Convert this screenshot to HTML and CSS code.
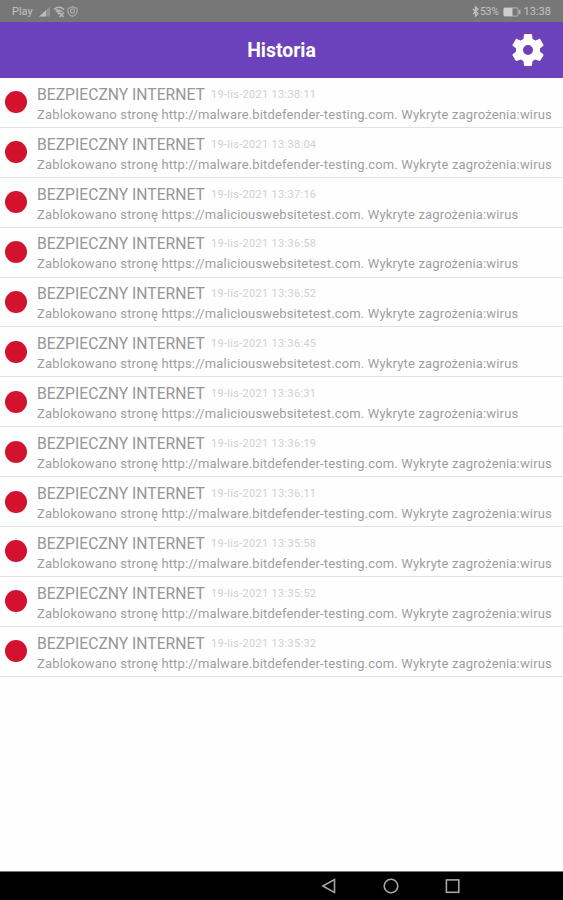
FILE: index.html
```
<!DOCTYPE html>
<html lang="pl">
<head>
  <meta charset="UTF-8">
  <meta name="viewport" content="width=device-width, initial-scale=1.0">
  <title>Historia</title>
  <link rel="stylesheet" href="styles.css">
</head>
<body>
  <!-- Status bar -->
  <div class="status-bar">
    <div class="status-left">
      <span class="carrier">Play</span>
      <svg class="signal" width="12" height="11" viewBox="0 0 12 11">
        <path d="M0 10.5L11 0.5V10.5Z" fill="#929292"/>
        <path d="M0 10.5L7 4.2V10.5Z" fill="#bcbcbc"/>
      </svg>
      <svg width="12" height="12" viewBox="0 0 12 12" fill="none" stroke="#b8b8b8" stroke-width="1.5">
        <path d="M0.8 3.5Q6 -1 11.2 3.5M2.8 5.7Q6 3 9.2 5.7M4.5 7.8Q6 6.6 7.5 7.8M2 2L10.5 11M6.5 11L11 6.5"/>
      </svg>
      <svg width="11" height="11" viewBox="0 0 11 11" fill="none" stroke="#a6a6a6" stroke-width="1.3">
        <path d="M1 2.5L5.5 0.8L10 2.5V6Q9.5 9 5.5 10.3Q1.5 9 1 6Z"/>
        <circle cx="5.5" cy="5" r="2"/>
      </svg>
    </div>
    <div class="status-right">
      <svg width="7" height="11" viewBox="0 0 7 11" fill="none" stroke="#c4c4c4" stroke-width="1.2">
        <path d="M1 3L6 7.8L3.5 10.2V0.8L6 3.2L1 8"/>
      </svg>
      <span class="percent">53%</span>
      <svg class="battery" width="18" height="10" viewBox="0 0 18 10">
        <rect x="0.6" y="0.9" width="14.5" height="8.2" rx="1.5" fill="none" stroke="#b5b5b5"/>
        <rect x="1" y="1" width="8.5" height="8" fill="#cecece"/>
        <rect x="16" y="3" width="1.5" height="4" fill="#b5b5b5"/>
      </svg>
      <span class="clock">13:38</span>
    </div>
  </div>

  <!-- Header -->
  <header class="header">
    <h1 class="header-title">Historia</h1>
    <svg class="settings" width="40" height="40" viewBox="0 0 24 24">
      <path fill="#fff" d="M19.14 12.94c.04-.3.06-.61.06-.94s-.02-.64-.07-.94l2.03-1.58c.18-.14.23-.41.12-.61l-1.92-3.32c-.12-.22-.37-.29-.59-.22l-2.39.96c-.5-.38-1.03-.7-1.62-.94l-.36-2.54c-.04-.24-.24-.41-.48-.41h-3.84c-.24 0-.43.17-.47.41l-.36 2.54c-.59.24-1.13.57-1.62.94l-2.39-.96c-.22-.08-.47 0-.59.22L2.74 8.87c-.12.21-.08.47.12.61l2.03 1.58c-.05.3-.09.63-.09.94s.02.64.07.94l-2.03 1.58c-.18.14-.23.41-.12.61l1.92 3.32c.12.22.37.29.59.22l2.39-.96c.5.38 1.03.7 1.62.94l.36 2.54c.05.24.24.41.48.41h3.84c.24 0 .44-.17.47-.41l.36-2.54c.59-.24 1.13-.56 1.62-.94l2.39.96c.22.08.47 0 .59-.22l1.92-3.32c.12-.22.07-.47-.12-.61l-2.01-1.58zM12 15a3 3 0 1 1 0-6 3 3 0 0 1 0 6z"/>
    </svg>
  </header>

  <!-- History list -->
  <main class="history">
    <div class="entry">
      <span class="dot"></span>
      <div class="entry-text">
        <div class="entry-head"><span class="entry-title">BEZPIECZNY INTERNET</span><span class="entry-date">19-lis-2021 13:38:11</span></div>
        <div class="entry-info">Zablokowano stronę http://malware.bitdefender-testing.com. Wykryte zagrożenia:wirus</div>
      </div>
    </div>
    <div class="entry">
      <span class="dot"></span>
      <div class="entry-text">
        <div class="entry-head"><span class="entry-title">BEZPIECZNY INTERNET</span><span class="entry-date">19-lis-2021 13:38:04</span></div>
        <div class="entry-info">Zablokowano stronę http://malware.bitdefender-testing.com. Wykryte zagrożenia:wirus</div>
      </div>
    </div>
    <div class="entry">
      <span class="dot"></span>
      <div class="entry-text">
        <div class="entry-head"><span class="entry-title">BEZPIECZNY INTERNET</span><span class="entry-date">19-lis-2021 13:37:16</span></div>
        <div class="entry-info">Zablokowano stronę https://maliciouswebsitetest.com. Wykryte zagrożenia:wirus</div>
      </div>
    </div>
    <div class="entry">
      <span class="dot"></span>
      <div class="entry-text">
        <div class="entry-head"><span class="entry-title">BEZPIECZNY INTERNET</span><span class="entry-date">19-lis-2021 13:36:58</span></div>
        <div class="entry-info">Zablokowano stronę https://maliciouswebsitetest.com. Wykryte zagrożenia:wirus</div>
      </div>
    </div>
    <div class="entry">
      <span class="dot"></span>
      <div class="entry-text">
        <div class="entry-head"><span class="entry-title">BEZPIECZNY INTERNET</span><span class="entry-date">19-lis-2021 13:36:52</span></div>
        <div class="entry-info">Zablokowano stronę https://maliciouswebsitetest.com. Wykryte zagrożenia:wirus</div>
      </div>
    </div>
    <div class="entry">
      <span class="dot"></span>
      <div class="entry-text">
        <div class="entry-head"><span class="entry-title">BEZPIECZNY INTERNET</span><span class="entry-date">19-lis-2021 13:36:45</span></div>
        <div class="entry-info">Zablokowano stronę https://maliciouswebsitetest.com. Wykryte zagrożenia:wirus</div>
      </div>
    </div>
    <div class="entry">
      <span class="dot"></span>
      <div class="entry-text">
        <div class="entry-head"><span class="entry-title">BEZPIECZNY INTERNET</span><span class="entry-date">19-lis-2021 13:36:31</span></div>
        <div class="entry-info">Zablokowano stronę https://maliciouswebsitetest.com. Wykryte zagrożenia:wirus</div>
      </div>
    </div>
    <div class="entry">
      <span class="dot"></span>
      <div class="entry-text">
        <div class="entry-head"><span class="entry-title">BEZPIECZNY INTERNET</span><span class="entry-date">19-lis-2021 13:36:19</span></div>
        <div class="entry-info">Zablokowano stronę http://malware.bitdefender-testing.com. Wykryte zagrożenia:wirus</div>
      </div>
    </div>
    <div class="entry">
      <span class="dot"></span>
      <div class="entry-text">
        <div class="entry-head"><span class="entry-title">BEZPIECZNY INTERNET</span><span class="entry-date">19-lis-2021 13:36:11</span></div>
        <div class="entry-info">Zablokowano stronę http://malware.bitdefender-testing.com. Wykryte zagrożenia:wirus</div>
      </div>
    </div>
    <div class="entry">
      <span class="dot"></span>
      <div class="entry-text">
        <div class="entry-head"><span class="entry-title">BEZPIECZNY INTERNET</span><span class="entry-date">19-lis-2021 13:35:58</span></div>
        <div class="entry-info">Zablokowano stronę http://malware.bitdefender-testing.com. Wykryte zagrożenia:wirus</div>
      </div>
    </div>
    <div class="entry">
      <span class="dot"></span>
      <div class="entry-text">
        <div class="entry-head"><span class="entry-title">BEZPIECZNY INTERNET</span><span class="entry-date">19-lis-2021 13:35:52</span></div>
        <div class="entry-info">Zablokowano stronę http://malware.bitdefender-testing.com. Wykryte zagrożenia:wirus</div>
      </div>
    </div>
    <div class="entry">
      <span class="dot"></span>
      <div class="entry-text">
        <div class="entry-head"><span class="entry-title">BEZPIECZNY INTERNET</span><span class="entry-date">19-lis-2021 13:35:32</span></div>
        <div class="entry-info">Zablokowano stronę http://malware.bitdefender-testing.com. Wykryte zagrożenia:wirus</div>
      </div>
    </div>
  </main>

  <!-- Android navigation -->
  <nav class="nav-bar">
    <svg width="16" height="16" viewBox="0 0 16 16" fill="none" stroke="#a6a6a6" stroke-width="1.6">
      <path d="M13.5 1.5V14.5L1.8 8Z"/>
    </svg>
    <svg width="16" height="16" viewBox="0 0 16 16" fill="none" stroke="#a6a6a6" stroke-width="1.6">
      <circle cx="8" cy="8" r="6.8"/>
    </svg>
    <svg width="16" height="16" viewBox="0 0 16 16" fill="none" stroke="#a6a6a6" stroke-width="1.6">
      <rect x="1.4" y="1.9" width="12.4" height="12.4"/>
    </svg>
  </nav>
</body>
</html>
```
FILE: styles.css
```
* {
  box-sizing: border-box;
}

body {
  margin: 0;
  height: 900px;
  display: flex;
  flex-direction: column;
  background: #fefefe;
  font-family: Roboto, sans-serif;
  overflow: hidden;
}

svg {
  display: block;
  flex-shrink: 0;
}

/* Status bar */
.status-bar {
  height: 22px;
  flex-shrink: 0;
  padding: 1px 12px 0 12px;
  display: flex;
  align-items: center;
  justify-content: space-between;
  background: #777777;
  color: #c4c4c4;
  font-size: 11px;
}

.status-left,
.status-right {
  display: flex;
  align-items: center;
}

.status-left {
  gap: 2px;
}

.signal {
  margin-left: 4px;
}

.percent {
  margin-left: 1px;
  font-size: 10.5px;
  letter-spacing: -0.3px;
}

.battery {
  margin: 0 3px 0 4px;
}

/* Header */
.header {
  height: 56px;
  flex-shrink: 0;
  padding-right: 15px;
  display: grid;
  grid-template-columns: 55px 1fr 40px;
  align-items: center;
  background: #6b42bb;
}

.header-title {
  grid-column: 2;
  margin: 0;
  padding-top: 1px;
  text-align: center;
  font-size: 19.4px;
  font-weight: 700;
  color: #fff;
}

/* History list */
.history {
  flex: 1;
}

.entry {
  height: 49.9px;
  padding-left: 5px;
  display: flex;
  align-items: center;
  border-bottom: 1px solid #e2e2e2;
}

.dot {
  width: 22px;
  height: 22px;
  margin-right: 10px;
  flex-shrink: 0;
  border-radius: 50%;
  background: #d3122f;
}

.entry-text {
  padding-top: 4.6px;
  white-space: nowrap;
}

.entry-head {
  height: 20px;
  display: flex;
  align-items: center;
  line-height: 20px;
}

.entry-title {
  width: 174px;
  font-size: 15.7px;
  color: #969696;
}

.entry-date {
  font-size: 11px;
  letter-spacing: 0.3px;
  color: #d0d0d0;
}

.entry-info {
  line-height: 20px;
  font-size: 13px;
  letter-spacing: 0.16px;
  color: #9e9e9e;
}

/* Android navigation */
.nav-bar {
  height: 29px;
  flex-shrink: 0;
  padding-left: 321px;
  display: flex;
  align-items: center;
  gap: 46px;
  background: #000;
  border-top: 1px solid #777;
}
```
